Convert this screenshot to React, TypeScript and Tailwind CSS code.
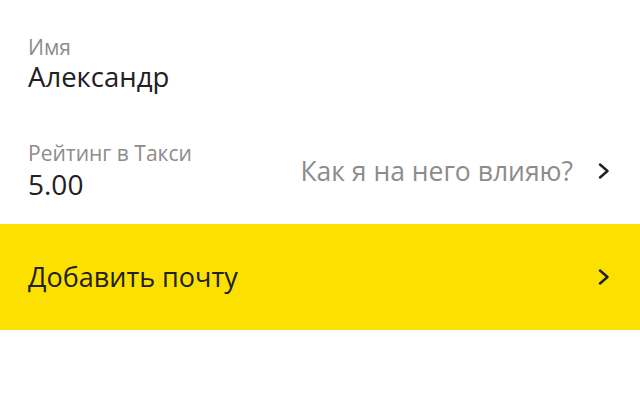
function Chevron() {
    return (
        <svg
            width="12"
            height="16"
            viewBox="0 0 12 16"
            fill="none"
            stroke="currentColor"
            strokeWidth="2.4"
            strokeLinecap="round"
            strokeLinejoin="round"
        >
            <polyline points="2,1.5 9.5,8 2,14.5" />
        </svg>
    );
}

export default function App() {
    return (
        <div className="h-[400px] w-[640px] overflow-hidden bg-white font-['Open_Sans',sans-serif] text-[#21201f]">
            <div className="flex flex-col px-[28px] pt-[35px]">
                <div className="text-[21px] leading-[25px] text-[#8c8c8c]">Имя</div>
                <div className="text-[27.5px] leading-[34px]">Александр</div>
            </div>

            <div className="mt-[46px] flex items-center justify-between pl-[28px] pr-[30px]">
                <div className="flex flex-col">
                    <div className="text-[21px] leading-[27px] text-[#8c8c8c]">
                        Рейтинг в Такси
                    </div>
                    <div className="text-[28px] leading-[34px]">5.00</div>
                </div>
                <div className="flex items-center gap-[25px]">
                    <span className="text-[26.5px] leading-[34px] text-[#8c8c8c]">
                        Как я на него влияю?
                    </span>
                    <Chevron />
                </div>
            </div>

            <div className="mt-[23px] flex h-[106px] items-center justify-between bg-[#fce000] pl-[28px] pr-[30px]">
                <span className="text-[27px] leading-[34px]">Добавить почту</span>
                <Chevron />
            </div>
        </div>
    );
}
